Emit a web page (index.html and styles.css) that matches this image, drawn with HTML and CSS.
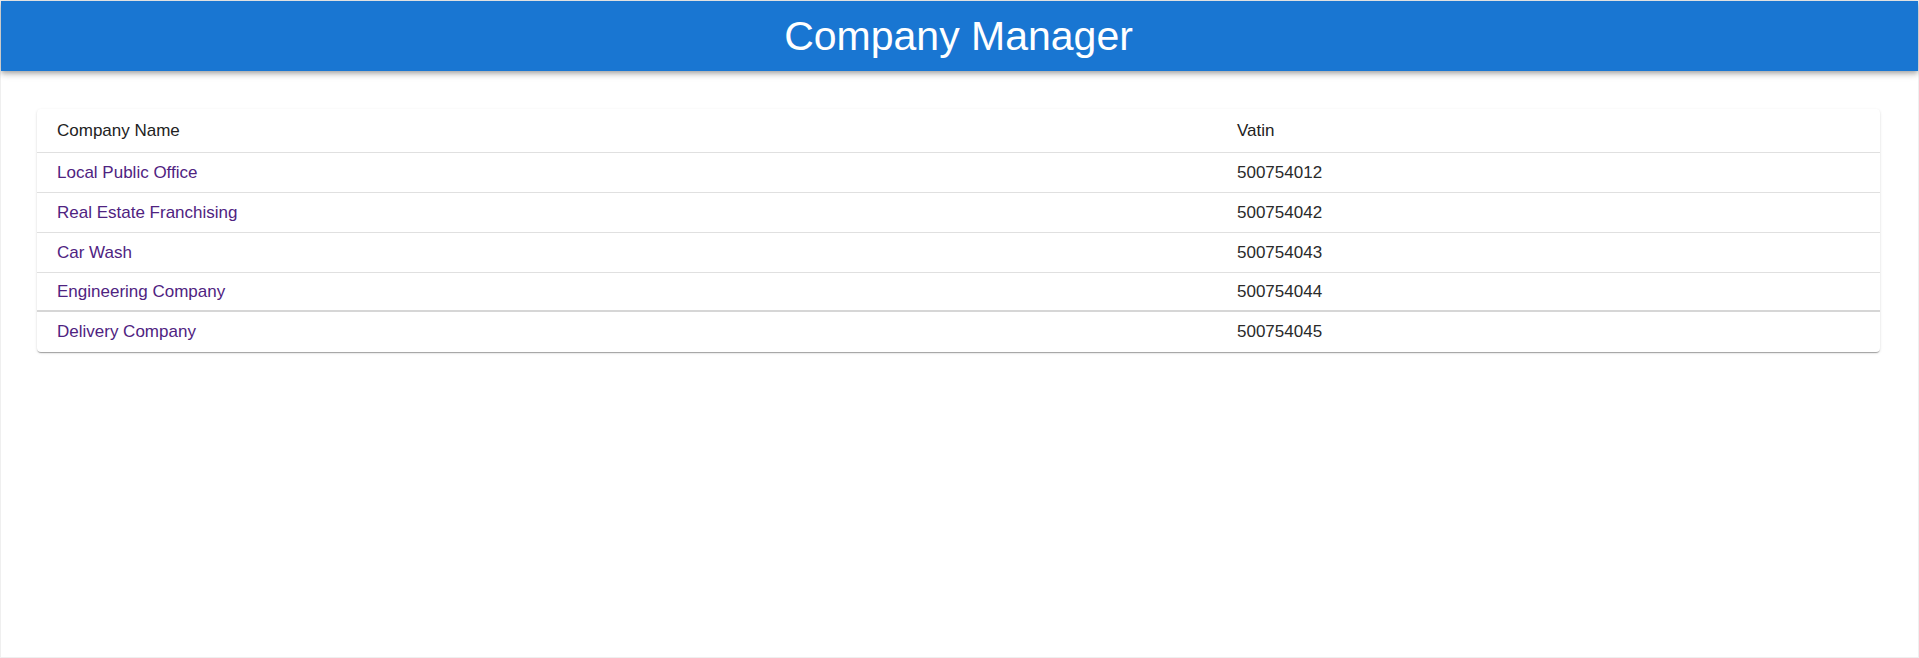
FILE: index.html
```html
<!DOCTYPE html>
<html lang="en">
<head>
<meta charset="utf-8">
<title>Company Manager</title>
<link rel="stylesheet" href="styles.css">
</head>
<body>
<div class="frame">
  <header class="appbar">
    <h1 class="title">Company Manager</h1>
  </header>
  <main class="content">
    <div class="card">
      <div class="row head">
        <div class="cell">Company Name</div>
        <div class="cell">Vatin</div>
      </div>
      <div class="row">
        <div class="cell"><a class="link" href="#c1">Local Public Office</a></div>
        <div class="cell num">500754012</div>
      </div>
      <div class="row">
        <div class="cell"><a class="link" href="#c2">Real Estate Franchising</a></div>
        <div class="cell num">500754042</div>
      </div>
      <div class="row">
        <div class="cell"><a class="link" href="#c3">Car Wash</a></div>
        <div class="cell num">500754043</div>
      </div>
      <div class="row strong">
        <div class="cell"><a class="link" href="#c4">Engineering Company</a></div>
        <div class="cell num">500754044</div>
      </div>
      <div class="row last">
        <div class="cell"><a class="link" href="#c5">Delivery Company</a></div>
        <div class="cell num">500754045</div>
      </div>
    </div>
  </main>
</div>
</body>
</html>
```

FILE: styles.css
```css
* { box-sizing: border-box; }
html, body { margin: 0; padding: 0; background: #fff; }
body {
  font-family: "Liberation Sans", Arial, sans-serif;
  color: #222;
}
.frame {
  height: 658px;
  border: 1px solid #efefef;
  display: flex;
  flex-direction: column;
}
.appbar {
  height: 70px;
  background: #1976d2;
  display: flex;
  align-items: center;
  justify-content: center;
  box-shadow: 0 2px 4px -1px rgba(0,0,0,0.2), 0 4px 5px 0 rgba(0,0,0,0.14), 0 1px 10px 0 rgba(0,0,0,0.12);
  position: relative;
  z-index: 1;
}
.title {
  margin: 0;
  color: #fff;
  font-weight: 400;
  font-size: 41px;
  line-height: 1;
  padding-right: 2px;
}
.content {
  padding: 38px 38px 0 36px;
}
.card {
  background: #fff;
  border-radius: 4px;
  box-shadow: 0 2px 1px -1px rgba(0,0,0,0.2), 0 1px 1px 0 rgba(0,0,0,0.14), 0 1px 3px 0 rgba(0,0,0,0.12);
}
.row {
  display: grid;
  grid-template-columns: 1180px 1fr;
  height: 40px;
  align-items: center;
  border-bottom: 1px solid #e0e0e0;
  font-size: 17px;
}
.row.head {
  height: 44px;
  padding-top: 1px;
}
.row.strong {
  height: 39px;
  border-bottom: 2px solid #d6d6d6;
}
.row.last {
  border-bottom: none;
  height: 40px;
}
.cell {
  padding: 0 20px;
  white-space: nowrap;
}
.num { color: #2a2a2a; }
.link {
  color: #4f2381;
  text-decoration: none;
}
```
